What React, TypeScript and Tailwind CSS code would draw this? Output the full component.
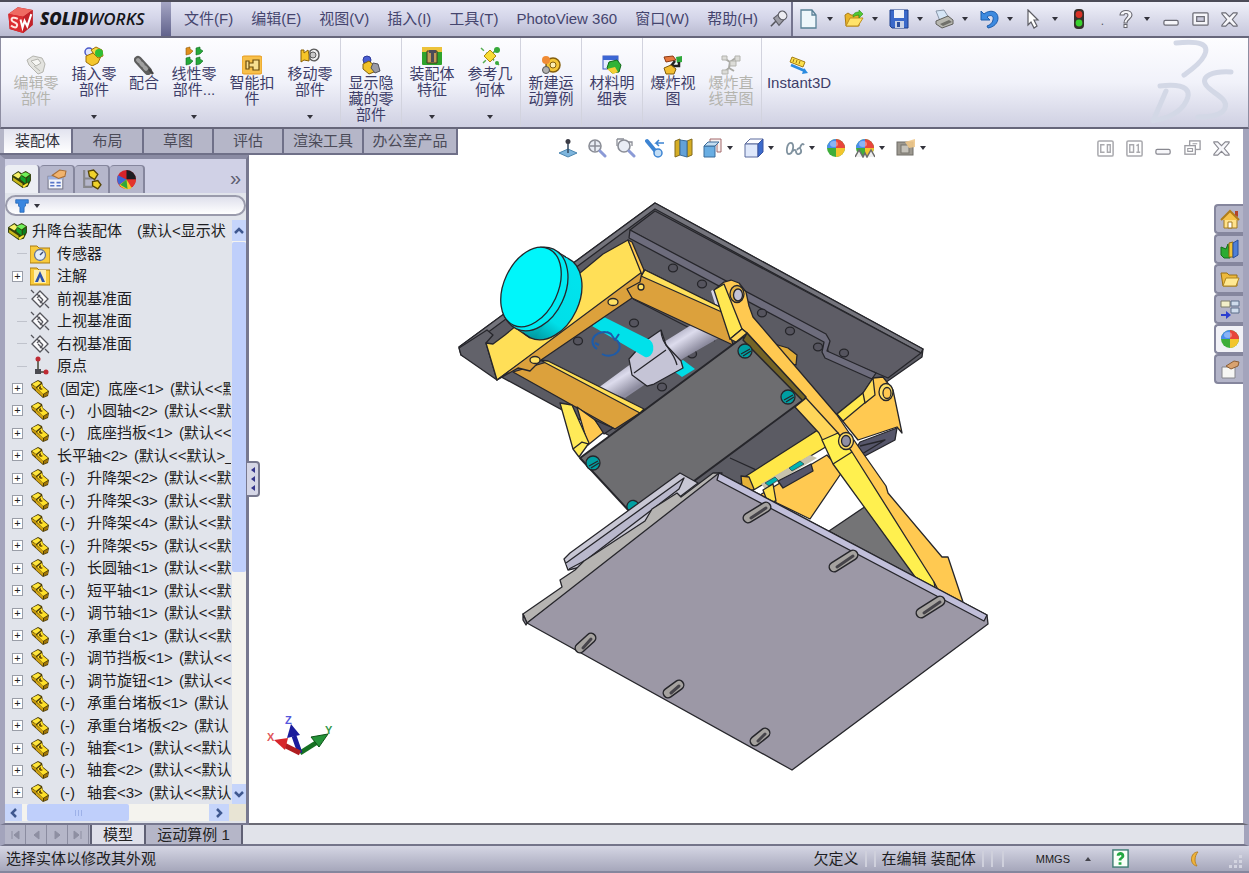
import type { ReactNode } from "react";

const partIcon = (
  <>
    <path d="M1 5 8 1l4 2 1 4 6 5-1 5-5 2L2 9z" fill="#4a3b08" />
    <path d="M2 5 8 2l3 2-5 4z" fill="#ffe63a" />
    <path d="M2 6l4 2v3L2 8z" fill="#c79a0c" />
    <path d="M7 9l5-4 1 3 5 4-5 3z" fill="#ffe02a" />
    <path d="M6 9l7 6v3l-7-6z" fill="#d2a413" />
    <path d="M14 15l4-2v3l-4 2z" fill="#9f7508" />
    <path d="M9 8l2-1v2l2 1-2 1-2-1z" fill="#6b4b04" />
  </>
);

const wheel = (
  <>
    <circle cx="10" cy="10" r="9" fill="#3fae3a" />
    <path d="M10 10V1a9 9 0 0 0-9 9z" fill="#4a8df0" />
    <path d="M10 10V1a9 9 0 0 1 9 9z" fill="#e8453b" />
    <path d="M10 10h9a9 9 0 0 1-9 9z" fill="#f3c52d" />
    <ellipse cx="8" cy="6" rx="4" ry="3" fill="#fff" opacity=".35" />
  </>
);

const asmIcon = (
  <>
    <path d="M1 6 7 2l3 2 4-2 5 3v6l-3 6-5 1L1 11z" fill="#33400a" />
    <path d="M2 6l5-3 3 3-3 3z" fill="#f7f06a" />
    <path d="M2 8l9 6v3l-9-6z" fill="#c9b61a" />
    <path d="M9 5l5-2 4 2-4 3z" fill="#6ff05a" />
    <path d="M9 6l5 3v5l-5-4z" fill="#12a329" />
    <path d="M15 9l3-3v5l-3 3z" fill="#0c7e1e" />
    <path d="M11 16l5-3v2l-4 3z" fill="#ffe63a" />
  </>
);

const magnifier = (
  <>
    <circle cx="8" cy="8" r="6" fill="#e9edf5" stroke="#8a8d96" strokeWidth="1.6" />
    <path d="M13 13l5 5" stroke="#8b9ad6" strokeWidth="3" strokeLinecap="round" />
  </>
);

const icons: Record<string, ReactNode> = {
  part: partIcon,
  asm: asmIcon,
  wheel,
  logo: (
    <>
      <path d="M1 6 8 1l11 2v11l-7 6L2 17z" fill="#b3141b" />
      <path d="M1 6 8 1l11 2-7 5z" fill="#ef6a62" />
      <path d="M12 8l7-5v11l-7 6z" fill="#c3222a" />
      <path d="M1 6l11 2v12L2 17z" fill="#dc2d31" />
      <path d="M8 9.500C5 8 3 8.500 3.500 10.500S8 12 7.500 14.500 4 15.500 3 14.500" stroke="#ffe6e0" strokeWidth="1.500" fill="none" />
      <path d="M10 10l1.500 6L13 11l2 4 3-9" stroke="#fff" strokeWidth="1.500" fill="none" />
    </>
  ),
  pin: (
    <>
      <path d="M1 18l6-6" stroke="#55555c" strokeWidth="1.800" />
      <path d="M4 9l9-7 5 6-8 9z" fill="#9d9da6" stroke="#5d5d66" strokeWidth="1.300" />
      <ellipse cx="14" cy="6" rx="4.500" ry="5" fill="#ececf2" stroke="#5d5d66" strokeWidth="1.300" transform="rotate(-40 14 6)" />
    </>
  ),
  doc: <path d="M2 1h11l4 5v13H2z M13 1v5h4" fill="#eef7fb" stroke="#5a8297" strokeWidth="1.300" />,
  open: (
    <>
      <path d="M1 6l3-2 3 2h8v11H2z" fill="#e9b52a" stroke="#ab7c14" />
      <path d="M2 17l4-8h13l-5 8z" fill="#ffe36a" stroke="#bf8e1c" />
      <path d="M9 8c0-4 3-5 6-5V1l4 4-4 4V6c-3 0-4 1-6 2z" fill="#52c832" stroke="#2b8f1c" strokeWidth=".6" />
    </>
  ),
  save: (
    <>
      <path d="M1 1h18v18H3l-2-2z" fill="#3a69c9" stroke="#1d3f8a" />
      <path d="M5 1h10v8H5z" fill="#eef1f8" />
      <path d="M6 12h9v7H6z" fill="#c8d2e6" />
      <path d="M8 13h3v5H8z" fill="#2c4f9c" />
    </>
  ),
  print: (
    <>
      <path d="M2 2l8-1 5 8-9 3z" fill="#d5e5f6" stroke="#8896a8" />
      <path d="M2 12l12-5 5 4v4l-11 4-6-4z" fill="#b7b7b0" stroke="#5f5f5b" />
      <path d="M6 15l9-4 3 2-9 4z" fill="#70706a" />
    </>
  ),
  undo: <path d="M2 2v9h9L8 8c4-3 7-1 6 3-.5 3-3 5-6 6l1 2c6-1 10-5 10-10C19 2 11 0 5 5z" fill="#3d8ae0" stroke="#1d5cab" />,
  cursor: <path d="M4 1l10 10h-4l3 6-3 2-3-6-3 3z" fill="#fff" stroke="#5c5c63" strokeWidth="1.200" />,
  traffic: (
    <>
      <rect x="5" y="0" width="10" height="20" rx="4" fill="#35302c" />
      <circle cx="10" cy="5.500" r="3.400" fill="#d83125" />
      <circle cx="10" cy="14" r="3.400" fill="#38d02d" />
    </>
  ),
  help: (
    <>
      <path d="M4 6c0-6 12-6 12 0 0 4-5 4-5 8H8c0-5 4-5 4-8 0-2-4-2-4 0z" fill="#f7f7fa" stroke="#66666e" strokeWidth="1.100" />
      <rect x="8" y="15.500" width="3" height="3" fill="#fff" stroke="#66666e" />
    </>
  ),
  min: <rect x="2" y="11" width="15" height="5" rx="1.500" fill="#f6f6fa" stroke="#6b6b75" strokeWidth="1.300" />,
  max: (
    <>
      <rect x="2" y="3" width="16" height="13" rx="1" fill="#f6f6fa" stroke="#6b6b75" strokeWidth="1.300" />
      <rect x="6" y="7" width="8" height="5" fill="#c9c9da" stroke="#6b6b75" strokeWidth="1.300" />
    </>
  ),
  close: <path d="M2 3h4l4 4 4-4h4v1l-5 6 5 6v1h-4l-4-4-4 4H2v-1l5-6-5-6z" fill="#f6f6fa" stroke="#6b6b75" strokeWidth="1.200" />,
  restore: (
    <>
      <rect x="7" y="2" width="11" height="9" fill="#fff" stroke="#85858d" strokeWidth="1.400" />
      <rect x="2" y="7" width="11" height="9" fill="#fff" stroke="#85858d" strokeWidth="1.400" />
      <path d="M5 10h5v3H5zM10 5h5" fill="none" stroke="#85858d" strokeWidth="1.200" />
    </>
  ),
  paneL: (
    <>
      <rect x="2" y="2" width="16" height="16" rx="1.500" fill="#fff" stroke="#95959b" strokeWidth="1.600" />
      <path d="M9 6H5v8h4M12 6h3v8h-3z" fill="none" stroke="#95959b" strokeWidth="1.500" />
    </>
  ),
  paneR: (
    <>
      <rect x="2" y="2" width="16" height="16" rx="1.500" fill="#fff" stroke="#95959b" strokeWidth="1.600" />
      <path d="M5 6h4v8H5zM12 7l2-1v8M12 14h4" fill="none" stroke="#95959b" strokeWidth="1.500" />
    </>
  ),
  editPart: (
    <g opacity=".85">
      <path d="M1 5l6-4 9 2 3 6-2 8-5 2-9-9z" fill="#e0e0da" stroke="#a9a9a1" />
      <path d="M5 6l7-2 3 4-5 3zM8 11l6 5" fill="#f6f6f2" stroke="#a9a9a1" />
    </g>
  ),
  insertPart: (
    <>
      <circle cx="5" cy="6" r="4" fill="#dfe5ff" stroke="#4b59c9" strokeWidth="1.500" />
      <path d="M2 10l7-3 8 3-3 7-6 3-6-4z" fill="#f4c62c" stroke="#9d7108" />
      <path d="M7 4l5-3 6 3 1 6-5 2-4-4z" fill="#f9d643" stroke="#9d7108" />
      <circle cx="15" cy="7" r="4" fill="#2fbf35" />
    </>
  ),
  mate: (
    <>
      <path d="M4 5l10 11" stroke="#5d5d5d" strokeWidth="8" strokeLinecap="round" />
      <path d="M4 5l10 11" stroke="#a0a0a0" strokeWidth="4" strokeLinecap="round" strokeDasharray="2 3" />
      <path d="M15 14l4 5" stroke="#444" strokeWidth="2.500" />
    </>
  ),
  pattern: (
    <>
      <path d="M2 2l4-1v2l3 2-3 3-4 1z" fill="#e08f1c" stroke="#8f5a0c" strokeWidth=".6" />
      <path d="M12 2l4-1v2l3 2-3 3-4 1zM2 12l4-1v2l3 2-3 3-4 1zM12 12l4-1v2l3 2-3 3-4 1z" fill="#26a83a" stroke="#116b20" strokeWidth=".6" />
    </>
  ),
  smart: (
    <>
      <rect x="0" y="1" width="20" height="18" rx="2" fill="#f7c04a" stroke="#e79a1c" />
      <path d="M4 6h3v8H4zM7 8h4V5h6v10h-6v-3H7z" fill="#f8df91" stroke="#6a4b0c" strokeWidth="1.200" />
    </>
  ),
  move: (
    <>
      <path d="M1 4h3v3l4-3 1 5v6l-5-1-3 2z" fill="#f6c527" stroke="#886106" />
      <path d="M10 5c4-4 9-1 9 4s-5 8-9 4z" fill="#f2f2f2" stroke="#5b5b5b" strokeWidth="1.400" />
      <circle cx="13" cy="9" r="3" fill="#c9c9c9" stroke="#5b5b5b" />
    </>
  ),
  showHide: (
    <>
      <circle cx="6" cy="5" r="4" fill="#4a5ed2" stroke="#2d3a99" />
      <path d="M2 9l6-3 6 5-1 6-5 2-6-5z" fill="#f2c32a" stroke="#83600a" />
      <path d="M12 8l5 1 2 7-5 2-4-5z" fill="#9b9ba5" stroke="#50505c" />
    </>
  ),
  feature: (
    <>
      <rect x="0" y="1" width="20" height="18" rx="1" fill="#2fa32b" />
      <path d="M0 1h20v5H0z" fill="#ecc23a" />
      <path d="M5 5h10v12H5z" fill="#c19b58" stroke="#3b3b20" />
      <path d="M9 4h3v12H9zM7 4h7v3H7z" fill="#4c4c58" />
    </>
  ),
  refGeo: (
    <>
      <path d="M1 2l18 17M3 17L18 2" stroke="#55ad51" strokeWidth="1.500" strokeDasharray="4 3" />
      <path d="M10 4l6 6-6 6-6-6z" fill="#f8dc35" stroke="#af870f" />
      <circle cx="17" cy="4" r="3" fill="#37a93a" />
      <circle cx="17" cy="17" r="2" fill="#37a93a" />
    </>
  ),
  motion: (
    <>
      <circle cx="12" cy="10" r="7" fill="#f5c638" stroke="#845e0c" strokeWidth="1.500" />
      <circle cx="12" cy="10" r="3" fill="#fdeeb2" stroke="#845e0c" />
      <circle cx="5" cy="5" r="4" fill="#f08b35" />
      <circle cx="5" cy="15" r="3.500" fill="#b1b1b1" stroke="#555" />
    </>
  ),
  bom: (
    <>
      <rect x="1" y="1" width="15" height="13" fill="#e6ebff" stroke="#3c59bd" />
      <path d="M1 1h15v4H1z" fill="#3c66d4" />
      <path d="M7 7l8-2 4 5-2 7-7 1-5-5z" fill="#31b337" stroke="#106a18" />
      <path d="M5 14l8-2 3 5-5 2z" fill="#f4cf36" />
    </>
  ),
  explode: (
    <>
      <path d="M1 2l9-1 3 4-10 2z" fill="#e7793f" stroke="#8c3a13" />
      <path d="M13 2l6-1v6l-5 1z" fill="#2fa83a" />
      <path d="M12 6l-4 5h8V7" fill="none" stroke="#222" strokeWidth="2.500" />
      <path d="M1 13l7-3 5 4-2 5H3z" fill="#f2be32" stroke="#7f5b0b" />
    </>
  ),
  explodeLine: (
    <>
      <path d="M3 3l6 4 7-5M9 7l-1 6-6 5M8 13l5 3" fill="none" stroke="#a9a9a4" strokeWidth="2" />
      <path d="M1 1h5v4H1zM14 1h5v5h-5zM1 15h6v4H1zM9 6h6v5H9z" fill="#dcdcd8" stroke="#b3b3ae" />
    </>
  ),
  instant: (
    <>
      <path d="M3 2l13 5-2 5L1 7z" fill="#fbe04c" stroke="#a37c12" />
      <path d="M5 4l-1 3M8 5l-1 3M11 6l-1 3" stroke="#a37c12" />
      <path d="M2 10l14 6" stroke="#2b8be0" strokeWidth="2.500" />
      <path d="M19 18l-6 1 2-6z" fill="#2b8be0" />
    </>
  ),
  normal: (
    <>
      <path d="M1 15l9-4 9 4-9 4z" fill="#7db5dd" stroke="#4c86b0" />
      <path d="M10 15V5" stroke="#33475c" strokeWidth="1.500" />
      <circle cx="10" cy="3.500" r="2.500" fill="#3d3d46" />
    </>
  ),
  zoomFit: (
    <>
      {magnifier}
      <path d="M8 3v10M3 8h10" stroke="#8a8d96" strokeWidth="1.500" />
    </>
  ),
  zoomArea: (
    <>
      {magnifier}
      <path d="M1 1h7M1 1v7M12 4h4v4" stroke="#8a8d96" strokeWidth="1.300" fill="none" />
    </>
  ),
  prevView: (
    <>
      <path d="M2 3l10 12" stroke="#3d84d2" strokeWidth="4" strokeLinecap="round" />
      <circle cx="13" cy="15" r="4" fill="#c3def6" stroke="#3d84d2" strokeWidth="1.500" />
      <path d="M19 5h-8l3-3M11 5l3 3" stroke="#3d84d2" strokeWidth="1.500" fill="none" />
    </>
  ),
  section: (
    <>
      <path d="M1 3l5-2v16l-5 2zM13 3l5-2v16l-5 2z" fill="#d5ad24" stroke="#826a1c" />
      <path d="M6 2l7 1v16l-7-2z" fill="#63a1d8" stroke="#3a6c9b" />
    </>
  ),
  orient: (
    <>
      <path d="M7 1h11v13h-4V5H7z" fill="#f8f1f1" stroke="#a2686a" />
      <path d="M1 8h11v11H1z" fill="#69aee3" stroke="#3a6c9b" />
      <path d="M1 8l4-4h11l-4 4z" fill="#c4def2" stroke="#3a6c9b" />
    </>
  ),
  display: (
    <>
      <path d="M1 6l5-5h13l-5 5z" fill="#fdfdff" stroke="#5b6a9d" />
      <path d="M1 6h13v13H1z" fill="#dfe8fb" stroke="#5b6a9d" />
      <path d="M14 6l5-5v13l-5 5z" fill="#3c6bcc" stroke="#3a55a0" />
    </>
  ),
  glasses: (
    <path d="M6 5C2 4 0 16 4 16s6-11 2-11zM8 13c2-2 3-1 3 1 1 4 6 2 5-2-1-3-3-2-4 0M15 10c1-4 3-5 4-3" fill="none" stroke="#80929f" strokeWidth="1.800" />
  ),
  scene: (
    <>
      {wheel}
      <path d="M0 19l4-7 4 7 2-4 2 4 4-7 4 7" fill="#efefef" stroke="#6b6b6b" strokeWidth="1.500" />
    </>
  ),
  render: (
    <>
      <rect x="1" y="4" width="16" height="13" fill="#9d9990" stroke="#6f6c66" />
      <rect x="5" y="7" width="8" height="8" fill="#c5c2ba" stroke="#77746d" />
      <path d="M9 4l10-3v8l-6 1z" fill="#f0c889" opacity=".9" />
    </>
  ),
  props: (
    <>
      <rect x="2" y="7" width="14" height="12" fill="#f2f4fb" stroke="#77798a" />
      <path d="M2 7h14v3H2z" fill="#9fb1dd" />
      <path d="M4 13h4M4 16h4M10 13h4M10 16h4" stroke="#5876c8" strokeWidth="1.500" />
      <path d="M6 6l7-5 6 1-1 5-6 2z" fill="#f1b36d" stroke="#a86d34" />
    </>
  ),
  config: (
    <>
      <path d="M3 1v16h8M3 9h8" stroke="#87878c" strokeWidth="2" fill="none" />
      <path d="M7 2l5-1 4 4-3 5-5-3zM11 12l5-1 3 4-3 4-5-3z" fill="#f0d22a" stroke="#554405" strokeWidth="1.300" />
    </>
  ),
  appear: (
    <>
      <circle cx="10" cy="10" r="9" fill="#d8232a" />
      <path d="M10 10V1a9 9 0 0 1 9 9z" fill="#1d1d22" />
      <path d="M10 10l9 0a9 9 0 0 1-6 8z" fill="#e3352d" />
      <path d="M10 10l5 8a9 9 0 0 1-12-3z" fill="#f5c929" />
      <path d="M10 10L3 15a9 9 0 0 1-1-9z" fill="#3d67d8" />
      <path d="M10 10l-6 5 7 4z" fill="#2fa83a" />
    </>
  ),
  sensor: (
    <>
      <path d="M0 2h7l2 2h11v15H0z" fill="#f9cb3c" stroke="#a97a10" />
      <circle cx="10" cy="11" r="5.500" fill="#e4eef9" stroke="#6a7894" strokeWidth="1.300" />
      <path d="M10 11l3-3" stroke="#3b4a73" strokeWidth="1.500" />
    </>
  ),
  note: (
    <>
      <path d="M0 2h7l2 2h11v15H0z" fill="#f9cb3c" stroke="#a97a10" />
      <path d="M4 4h12v13H4z" fill="#fdeeb0" />
      <path d="M5 16l5-11 5 11h-3l-2-5-2 5z" fill="#2c53ae" />
    </>
  ),
  plane: (
    <>
      <path d="M10 2l8 8-8 8-8-8z" fill="#fbfbfd" stroke="#55555c" strokeWidth="1.300" />
      <path d="M7 5l6 6M8 10l5 5M13 11l-3 3M7 9l3-3M1 1l3 3M15 15l4 4" fill="none" stroke="#55555c" strokeWidth="1.300" />
    </>
  ),
  origin: (
    <>
      <path d="M8 3v13h8" stroke="#443" strokeWidth="1.500" fill="none" />
      <circle cx="8" cy="3" r="2.500" fill="#bf2a33" />
      <circle cx="16" cy="16" r="2.500" fill="#bf2a33" />
      <rect x="5" y="13" width="6" height="5" fill="#4a4a50" />
    </>
  ),
  funnel: <path d="M1 1h18v5h-4v4l-2 2v7H7v-7l-2-2V6H1z" fill="#3986e0" stroke="#1c5cae" />,
  home: (
    <>
      <path d="M4 10h13v9H4z" fill="#ffe28b" stroke="#a37a20" />
      <path d="M1 11l9-9 9 9" fill="#f6c24a" stroke="#b07d1b" strokeWidth="2" />
      <path d="M15 2h3v6l-3-2z" fill="#b3442b" />
      <path d="M8 13h4v6H8z" fill="#fff" stroke="#a37a20" />
    </>
  ),
  library: (
    <>
      <path d="M1 8l5 2 2-5 2 14H4l-3-3z" fill="#2bab32" stroke="#13701c" />
      <path d="M9 4l4-1v15H9z" fill="#f2c337" stroke="#8f6c11" />
      <path d="M13 4l5-3v15l-5 3z" fill="#4f7fd6" stroke="#29509c" />
    </>
  ),
  folder: (
    <>
      <path d="M1 4h6l2 2h8v11H3z" fill="#edb93c" stroke="#9a7113" />
      <path d="M3 17l3-8h13l-3 8z" fill="#ffe993" stroke="#b08722" />
    </>
  ),
  palette: (
    <>
      <path d="M1 2h9v6H1z" fill="#f2efc9" stroke="#7d7d6a" />
      <path d="M11 2h8v5h-8zM11 9h8v5h-8z" fill="#cfdcec" stroke="#5c6f8a" />
      <path d="M1 15h5v-3l5 4-5 4v-3H1z" fill="#2d3fd0" />
    </>
  ),
  custom: (
    <>
      <path d="M2 8h13v11H2z" fill="#f6f6f4" stroke="#86868c" />
      <path d="M6 7l8-5 5 1-1 4-7 3z" fill="#d9a26e" stroke="#8c5f36" />
    </>
  ),
  qmark: (
    <>
      <rect x="2" y="1" width="16" height="18" fill="#f8fff8" stroke="#3f7d74" strokeWidth="1.500" />
      <path d="M6 7c0-5 8-5 8 0 0 3-3 3-3 5H8c0-3 3-3 3-5 0-1-2-1-2 0zM8 14h3v2.500H8z" fill="#23a842" />
    </>
  ),
  moon: <path d="M13 3C5 3 4 16 12 17c-1-2-2-3-2-6s1-6 3-8z" fill="#f0b43a" stroke="#b8832a" />,
};

function Icon({ name, size = "size-5" }: { name: string; size?: string }) {
  return (
    <svg viewBox="0 0 20 20" className={`${size} shrink-0`} aria-hidden="true">
      {icons[name]}
    </svg>
  );
}

function Arrow() {
  return (
    <svg viewBox="0 0 6 4" className="h-1 w-1.5 shrink-0" aria-hidden="true">
      <path d="M0 0h6L3 4z" fill="#33333c" />
    </svg>
  );
}

const menus = ["文件(F)", "编辑(E)", "视图(V)", "插入(I)", "工具(T)", "PhotoView 360", "窗口(W)", "帮助(H)"];

const quick: [string, string][] = [
  ["doc", "新建"],
  ["open", "打开"],
  ["save", "保存"],
  ["print", "打印"],
  ["undo", "撤消"],
  ["cursor", "选择"],
];

function TitleBar() {
  return (
    <header className="flex h-[38px] shrink-0 items-stretch border-t-2 border-b-2 border-t-[#4c4c58] border-b-[#66667a] bg-linear-to-b from-[#e6e7f5] via-[#d3d4e8] to-[#b9bad0]">
      <div className="flex w-[161px] items-center gap-1.5 pl-[7px]">
        <Icon name="logo" size="size-[27px]" />
        <span className="font-['Open_Sans',sans-serif] text-[17px] text-[#16161a] italic">
          <b className="font-extrabold">SOLID</b>
          <span className="font-semibold">WORKS</span>
        </span>
      </div>
      <div className="w-[10px] bg-linear-to-b from-[#a5a6c4] to-[#62638c]" />
      <nav className="flex grow items-center gap-[18px] pl-[13px] text-[15px] whitespace-nowrap text-[#45456e]">
        {menus.map((m) => (
          <button key={m} type="button">
            {m}
          </button>
        ))}
        <button type="button" aria-label="固定菜单" className="-ml-1.5">
          <Icon name="pin" size="size-[18px]" />
        </button>
      </nav>
      <div className="flex items-center border-l-2 border-[#74748e] bg-linear-to-b from-[#f0f1fa] to-[#c6c7dc] pr-[10px] pl-[6px]">
        {quick.map(([name, label]) => (
          <button key={name} type="button" aria-label={label} className="flex w-[45px] items-center gap-[8px]">
            <Icon name={name} />
            <Arrow />
          </button>
        ))}
        <button type="button" aria-label="重建模型">
          <Icon name="traffic" />
        </button>
        <span className="w-[27px] pt-1 text-center text-[12px] text-[#55555f]">.</span>
        <button type="button" aria-label="帮助" className="flex items-center gap-[8px]">
          <Icon name="help" />
          <Arrow />
        </button>
        <div className="ml-[12px] flex gap-[10px]">
          <button type="button" aria-label="最小化">
            <Icon name="min" size="size-[19px]" />
          </button>
          <button type="button" aria-label="最大化">
            <Icon name="max" size="size-[19px]" />
          </button>
          <button type="button" aria-label="关闭">
            <Icon name="close" size="size-[19px]" />
          </button>
        </div>
      </div>
    </header>
  );
}

type Tool = { icon: string; lines: string[]; menu?: boolean; off?: boolean; width?: string };

const toolGroups: Tool[][] = [
  [
    { icon: "editPart", lines: ["编辑零", "部件"], off: true },
    { icon: "insertPart", lines: ["插入零", "部件"], menu: true },
    { icon: "mate", lines: ["配合"], width: "w-[42px]" },
    { icon: "pattern", lines: ["线性零", "部件..."], menu: true },
    { icon: "smart", lines: ["智能扣", "件"] },
    { icon: "move", lines: ["移动零", "部件"], menu: true },
  ],
  [{ icon: "showHide", lines: ["显示隐", "藏的零", "部件"] }],
  [
    { icon: "feature", lines: ["装配体", "特征"], menu: true },
    { icon: "refGeo", lines: ["参考几", "何体"], menu: true },
  ],
  [{ icon: "motion", lines: ["新建运", "动算例"] }],
  [{ icon: "bom", lines: ["材料明", "细表"] }],
  [
    { icon: "explode", lines: ["爆炸视", "图"] },
    { icon: "explodeLine", lines: ["爆炸直", "线草图"], off: true },
  ],
  [{ icon: "instant", lines: ["Instant3D"], width: "w-[72px]" }],
];

function ToolButton({ tool }: { tool: Tool }) {
  return (
    <button
      type="button"
      disabled={tool.off}
      className={`flex h-full flex-col items-center text-[15px] leading-4 whitespace-nowrap ${tool.width ?? "w-[58px]"} ${
        tool.menu ? "pt-[8px]" : "pt-[17px]"
      } ${tool.off ? "text-[#b4b4ae]" : "text-[#3d3d68]"}`}
    >
      <Icon name={tool.icon} />
      {tool.lines.map((line) => (
        <span key={line} className="block">
          {line}
        </span>
      ))}
      {tool.menu && (
        <span className="mt-auto pb-[8px]">
          <Arrow />
        </span>
      )}
    </button>
  );
}

function Ribbon() {
  return (
    <section className="flex h-[91px] shrink-0 items-stretch border-x border-b-2 border-x-[#8e8ea2] border-b-[#66667a] bg-linear-to-b from-[#fdfdff] via-[#f1f2fa] to-[#cfd0e2] pl-[6px]">
      {toolGroups.map((group, i) => (
        <div key={i} className="flex">
          {i > 0 && <div className="mx-px w-px bg-[#d2d3de]" />}
          {group.map((tool) => (
            <ToolButton key={tool.icon} tool={tool} />
          ))}
        </div>
      ))}
      <svg viewBox="0 0 90 86" className="mr-[10px] ml-auto h-[86px] w-[90px]" aria-hidden="true">
        <g fill="none" stroke="#d3d8e6" strokeWidth="5" strokeLinecap="round" strokeLinejoin="round">
          <path d="M28 5c22-2 35 0 28 13-4 8-13 14-20 19" />
          <path d="M12 48c26-3 34 4 24 19-8 11-22 14-31 16l13-30" />
          <path d="M83 34c-18-1-31 4-25 13 5 8 23 13 19 23-3 8-16 9-27 9" />
        </g>
      </svg>
    </section>
  );
}

const ribbonTabs: [string, string][] = [
  ["装配体", "w-[69px]"],
  ["布局", "w-[71px]"],
  ["草图", "w-[70px]"],
  ["评估", "w-[70px]"],
  ["渲染工具", "w-[80px]"],
  ["办公室产品", "w-[94px]"],
];

const viewTools: [string, string, boolean][] = [
  ["normal", "正视于", false],
  ["zoomFit", "整屏显示全图", false],
  ["zoomArea", "局部放大", false],
  ["prevView", "上一视图", false],
  ["section", "剖面视图", false],
  ["orient", "视图定向", true],
  ["display", "显示样式", true],
  ["glasses", "隐藏项目", true],
  ["wheel", "编辑外观", false],
  ["scene", "应用布景", true],
  ["render", "视图设定", true],
];

const docControls: [string, string][] = [
  ["paneL", "左窗格"],
  ["paneR", "右窗格"],
  ["min", "最小化文档"],
  ["restore", "还原文档"],
  ["close", "关闭文档"],
];

function TabRow() {
  return (
    <div className="relative z-10 flex h-[26px] shrink-0 border-r-[6px] border-r-[#a3a4bc] bg-white">
      <div className="flex h-[26px] shrink-0 border-b-2 border-[#6f7088] bg-[#b5b6c8] pl-[4px]" role="tablist">
        {ribbonTabs.map(([tab, width], i) => (
          <button
            key={tab}
            type="button"
            role="tab"
            aria-selected={i === 0}
            className={`border-r-2 border-[#6f7088] text-[15px] leading-5 whitespace-nowrap ${width} ${
              i === 0 ? "bg-linear-to-b from-[#e2e3ef] to-white text-[#33333c]" : "text-[#4b4b58]"
            }`}
          >
            {tab}
          </button>
        ))}
      </div>
      <div className="flex grow items-end pl-[96px]">
        {viewTools.map(([name, label, menu]) => (
          <button
            key={name}
            type="button"
            aria-label={label}
            className={`flex h-[14px] items-center gap-[4px] pl-[4px] ${menu ? "w-[41px]" : "w-[29px]"}`}
          >
            <Icon name={name} />
            {menu && <Arrow />}
          </button>
        ))}
        <div className="mr-[12px] ml-auto flex h-[14px] items-center gap-[10px] opacity-80">
          {docControls.map(([name, label]) => (
            <button key={name} type="button" aria-label={label}>
              <Icon name={name} size="size-[19px]" />
            </button>
          ))}
        </div>
      </div>
    </div>
  );
}

type Node = { icon: string; name: string; prefix?: string; config?: string; open?: boolean };

const part = (name: string, config: string, prefix?: string): Node => ({ icon: "part", name, config, prefix, open: true });

const nodes: Node[] = [
  { icon: "sensor", name: "传感器" },
  { icon: "note", name: "注解", open: true },
  { icon: "plane", name: "前视基准面" },
  { icon: "plane", name: "上视基准面" },
  { icon: "plane", name: "右视基准面" },
  { icon: "origin", name: "原点" },
  part("底座<1>", "(默认<<默", "(固定)"),
  part("小圆轴<2>", "(默认<<默", "(-)"),
  part("底座挡板<1>", "(默认<<", "(-)"),
  part("长平轴<2>", "(默认<<默认>_"),
  part("升降架<2>", "(默认<<默", "(-)"),
  part("升降架<3>", "(默认<<默", "(-)"),
  part("升降架<4>", "(默认<<默", "(-)"),
  part("升降架<5>", "(默认<<默", "(-)"),
  part("长圆轴<1>", "(默认<<默", "(-)"),
  part("短平轴<1>", "(默认<<默", "(-)"),
  part("调节轴<1>", "(默认<<默", "(-)"),
  part("承重台<1>", "(默认<<默", "(-)"),
  part("调节挡板<1>", "(默认<<", "(-)"),
  part("调节旋钮<1>", "(默认<<", "(-)"),
  part("承重台堵板<1>", "(默认", "(-)"),
  part("承重台堵板<2>", "(默认", "(-)"),
  part("轴套<1>", "(默认<<默认", "(-)"),
  part("轴套<2>", "(默认<<默认", "(-)"),
  part("轴套<3>", "(默认<<默认", "(-)"),
];

function TreeRow({ node }: { node: Node }) {
  return (
    <li className="flex min-h-5 flex-1 items-center whitespace-nowrap">
      <span className="flex w-[25px] shrink-0 items-center pl-[7px]">
        {node.open ? (
          <button
            type="button"
            aria-label={`展开 ${node.name}`}
            className="flex size-[11px] items-center justify-center border border-[#9a9ea8] bg-white text-[11px] leading-none text-[#222]"
          >
            +
          </button>
        ) : (
          <span className="ml-[5px] h-px w-[10px] bg-[#c0c3cc]" />
        )}
      </span>
      <Icon name={node.icon} />
      <span className="ml-[7px] flex">
        {node.prefix && <span className="mr-2 min-w-[22px] pl-[3px]">{node.prefix}</span>}
        <span>{node.name}</span>
        {node.config && <span className="ml-[6px]">{node.config}</span>}
      </span>
    </li>
  );
}

const panelTabs: [string, string][] = [
  ["asm", "特征树"],
  ["props", "属性"],
  ["config", "配置"],
  ["appear", "外观"],
];

const chevrons = {
  up: "M2 8l4-4 4 4",
  down: "M2 4l4 4 4-4",
  left: "M8 2L4 6l4 4",
  right: "M4 2l4 4-4 4",
};

function Chevron({ dir }: { dir: keyof typeof chevrons }) {
  return (
    <svg viewBox="0 0 12 12" className="size-3" aria-hidden="true">
      <path d={chevrons[dir]} fill="none" stroke="#3f5890" strokeWidth="2.500" />
    </svg>
  );
}

function FeaturePanel() {
  return (
    <aside className="flex w-[249px] shrink-0 flex-col border-t-4 border-r-[3px] border-b-2 border-l-[5px] border-t-[#8a8ba3] border-r-[#77788f] border-b-[#77788f] border-l-[#a3a4bc] bg-[#e1e4eb]">
      <div className="flex h-[34px] items-end bg-[#d0d1e6]">
        {panelTabs.map(([name, label], i) => (
          <button
            key={name}
            type="button"
            aria-label={label}
            className={`flex h-[28px] w-[35px] items-center justify-center rounded-t border-r-2 border-[#85869d] ${
              i === 0 ? "bg-[#eceef4]" : "border-t bg-[#b5b6cb]"
            }`}
          >
            <Icon name={name} size="size-[21px]" />
          </button>
        ))}
        <button type="button" aria-label="展开面板" className="mr-[5px] mb-[7px] ml-auto text-[20px] leading-4 text-[#5d5e70]">
          »
        </button>
      </div>
      <label className="mt-[2px] flex h-[21px] items-center gap-[5px] rounded-full border-2 border-[#9a9bac] bg-linear-to-b from-[#dfe0ec] to-white pl-[8px]">
        <Icon name="funnel" size="size-[14px]" />
        <Arrow />
        <input aria-label="过滤" className="min-w-0 flex-1 bg-transparent text-[13px] outline-none" />
      </label>
      <div className="flex flex-1 pt-[4px]">
        <div className="flex min-w-0 flex-1 flex-col overflow-hidden text-[15px] leading-5 text-[#1d1d22]">
          <ul className="flex flex-1 flex-col">
            <li className="flex min-h-5 flex-1 items-center pl-[2px] whitespace-nowrap">
              <Icon name="asm" size="size-[21px]" />
              <span className="ml-[4px]">升降台装配体</span>
              <span className="ml-[15px]">(默认&lt;显示状</span>
            </li>
            {nodes.map((node) => (
              <TreeRow key={node.name} node={node} />
            ))}
          </ul>
        </div>
        <div className="ml-px flex w-[14px] flex-col bg-[#f4f3ee]">
          <button type="button" aria-label="向上滚动" className="flex h-[21px] items-center justify-center bg-[#c6d5fb]">
            <Chevron dir="up" />
          </button>
          <div className="mt-px h-[330px] rounded-xs bg-[#bfcffb]" />
          <button type="button" aria-label="向下滚动" className="mt-auto flex h-[20px] items-center justify-center bg-[#c6d5fb]">
            <Chevron dir="down" />
          </button>
        </div>
      </div>
      <div className="mb-[2px] flex h-[17px] items-stretch bg-[#f4f3ee]">
        <button type="button" aria-label="向左滚动" className="flex w-[17px] items-center justify-center bg-[#c6d5fb]">
          <Chevron dir="left" />
        </button>
        <div className="ml-[5px] flex w-[102px] items-center justify-center gap-0.5 rounded-xs bg-[#bfcffb]">
          <span className="h-1.5 w-px bg-[#9db1e8]" />
          <span className="h-1.5 w-px bg-[#9db1e8]" />
          <span className="h-1.5 w-px bg-[#9db1e8]" />
        </div>
        <button type="button" aria-label="向右滚动" className="ml-auto flex w-[20px] items-center justify-center bg-[#c6d5fb]">
          <Chevron dir="right" />
        </button>
        <div className="w-[17px] bg-[#e8e4d4]" />
      </div>
    </aside>
  );
}

const holes = [
  [673, 268],
  [702, 284],
  [762, 313],
  [790, 331],
  [818, 347],
  [844, 353],
  [634, 323],
  [692, 354],
  [578, 341],
  [662, 387],
];

const slots = [
  [748, 518, 766, 507],
  [834, 567, 853, 555],
  [921, 613, 940, 601],
  [580, 648, 591, 638],
  [668, 693, 679, 685],
  [755, 741, 765, 733],
];

const screws = [
  [745, 351],
  [788, 397],
  [593, 463],
];

function Model() {
  return (
    <svg viewBox="249 155 994 668" className="size-full" role="img" aria-label="升降台装配体模型">
      <defs>
        <linearGradient id="knob" gradientUnits="userSpaceOnUse" x1="560" y1="260" x2="548" y2="340">
          <stop offset="0" stopColor="#00e4ee" />
          <stop offset=".7" stopColor="#00dfe8" />
          <stop offset="1" stopColor="#009aa2" />
        </linearGradient>
        <linearGradient id="shaft" gradientUnits="userSpaceOnUse" x1="640" y1="352" x2="655" y2="376">
          <stop offset="0" stopColor="#a9a8bd" />
          <stop offset=".4" stopColor="#dddced" />
          <stop offset="1" stopColor="#8c8b9e" />
        </linearGradient>
      </defs>
      <g stroke="#26262b" strokeWidth="1.300" strokeLinejoin="round">
        {/* upper plate */}
        <path d="M655 203L923 349 922 357 722 497 461 355 459 347z" fill="#5b5b63" />
        <path d="M655 203L923 349 921 353 655 209 464 350 459 347z" fill="#74747c" />
        <path d="M630 230L655 211 921 353 888 378 874 372 829 354 824 338z" fill="#5e5d66" />
        <path d="M630 230L826 334 830 341 827 351 876 373 872 379 825 358 822 352 824 342 629 238z" fill="#6d6c7c" />
        <path d="M459 348L487 330 493 335 486 343 497 380 461 355z" fill="#62626a" />
        {holes.map(([x, y]) => (
          <ellipse key={`${x}-${y}`} cx={x} cy={y} rx="4.500" ry="3.800" fill="#55545e" />
        ))}
        <path d="M730 458L765 474M633 299L715 341" fill="none" />

        {/* shaft and coupling */}
        <path d="M598 388L643 355 696 322 716 308 738 318 724 335 684 358 625 398z" fill="url(#shaft)" stroke="none" />
        <path d="M711 291l10-6 8 14-13 8z" fill="#d7d6e8" stroke="none" />
        <path d="M669 368l14-8 12 9-13 8z" fill="#00dbe6" stroke="none" />
        <path d="M645 341L661 330 666 345 681 361 683 368 654 384 647 386 632 375 629 359z" fill="#c5c4d6" />
        <path d="M661 330C661 345 673 349 677 365M634 373L666 350" fill="none" />
        <path d="M592 326L604 317 648 339a6 8 0 0 1-3 18z" fill="#00e1ea" stroke="none" />

        {/* frame */}
        <path d="M513 372L547 362 643 411 615 429z" fill="#dca13c" />
        <path d="M540 360L548 361 644 409 640 413z" fill="#ffdf55" />
        <path d="M645 270L724 309 733 345 632 298 626 289z" fill="#dca13c" />
        <path d="M645 270L724 309 724 313 641 276z" fill="#ffe05a" />
        <path d="M577 407L595 420 604 432 588 445z" fill="#ffc84f" />
        <path d="M595 420L613 428 604 434z" fill="#4f4e59" />
        <path d="M560 403L572 405 589 443 579 457 573 449z" fill="#ffea58" />
        <path d="M573 449l9-7 7 2" fill="none" />
        <path d="M486 343L493 344 505 335 603 254 628 240 642 271 641 276 497 380z" fill="#ffdf57" />
        <path d="M497 380L642 272 640 282 627 289 632 298 541 360 530 371 518 368z" fill="#dca13c" />
        <path d="M628 240l4 2 12 28-2 5z" fill="#ffc84f" />
        <g fill="#ffe163">
          <ellipse cx="613" cy="302" rx="5" ry="3.500" />
          <ellipse cx="535" cy="360" rx="5" ry="3.500" />
          <ellipse cx="641" cy="287" rx="3" ry="3" />
        </g>

        {/* knob */}
        <ellipse cx="549" cy="298" rx="30" ry="44" transform="rotate(25 549 298)" fill="url(#knob)" />
        <path d="M550 249L568 259 572 290 535 338 516 329z" fill="url(#knob)" stroke="none" />
        <path d="M552 249L566 257M517 329L530 338" fill="none" />
        <ellipse cx="535" cy="289" rx="30" ry="44" transform="rotate(25 535 289)" fill="#00eaf2" />
        <ellipse cx="531" cy="287" rx="27" ry="42" transform="rotate(25 531 287)" fill="#00f6fb" />

        {/* cover plate */}
        <path d="M580 458L743 337 806 398 690 484 630 512z" fill="#6d6d70" strokeWidth="2" />

        {/* rotate pointer */}
        <g fill="none" stroke="#1e5ba8" strokeWidth="2">
          <path d="M597 349a11 9 0 0 1 14-15l-4-2M615 339a11 9 0 0 1-13 15M611 334l4 6 4-6M599 345l-4-2" />
        </g>

        {/* right bracket and rollers */}
        <path d="M860 442L897 428 895 440 863 457 855 450z" fill="#56566a" />
        <path d="M860 446L885 440 862 454" fill="none" />
        <path d="M837 414L863 393 873 378 883 377 893 390 902 433 897 427 858 440z" fill="#ffc951" />
        <path d="M837 414L863 393 867 401 843 421z" fill="#ffe84e" />
        <path d="M863 393l10-15 2 17-10 8z" fill="#ffdd5a" />
        <ellipse cx="886" cy="392" rx="7" ry="8.500" fill="#ffe067" />
        <ellipse cx="887" cy="393" rx="4" ry="5.500" fill="#ffc951" />
        <path d="M760 495L827 455 842 472 810 519 777 503z" fill="#ffc951" />
        <path d="M743 478L818 430 829 445 752 491z" fill="#ffe748" />
        <path d="M741 476l8 1 5 12-6 4-6-7z" fill="#e5b137" />
        <path d="M761 484L810 455 817 458 765 489z" fill="#c7c2ac" stroke="none" />
        <path d="M765 483l10-6 3 3-9 6zM789 468l11-7 4 3-12 7z" fill="#00b3b0" strokeWidth=".6" />
        <path d="M778 481L811 464 813 471 783 488z" fill="#56566a" />
        <path d="M763 490l10-6 3 17-8 2z" fill="#ffe04e" />

        {/* lower link plate */}
        <path d="M829 531L866 506 920 579 917 582z" fill="#747476" />

        {/* long arm */}
        <path d="M771 343l17 5 9 7-1 10-10-3z" fill="#e3ae38" />
        <path d="M714 290L724 282 731 280 739 283 746 292 749 306 753 317 837 415 858 446 886 486 888 493 942 557 948 557 963 602 940 596 833 447 805 398 747 333 741 328z" fill="#ffc951" />
        <path d="M714 290L724 284 742 329 730 339z" fill="#ffe752" />
        <path d="M742 329l5 4-11 9-6-3z" fill="#ffd75a" />
        <path d="M747 333L806 397 803 401 743 340z" fill="#746426" strokeWidth="1.500" />
        <path d="M795 407L806 398 838 433 824 443 819 433z" fill="#ffd65a" />
        <path d="M822 440L838 433 852 452 934 582 937 598 918 581 833 464z" fill="#fff04f" />
        <path d="M833 464l19-12M934 582l8 15" fill="none" />
        <ellipse cx="737" cy="294" rx="7" ry="8.500" fill="#e5b447" />
        <ellipse cx="738" cy="295" rx="4.500" ry="6" fill="#c4c3d6" />
        <ellipse cx="846" cy="441" rx="7.500" ry="8.500" fill="#ffdc67" />
        <ellipse cx="846" cy="441" rx="4.500" ry="5.500" fill="#8f8ea4" />

        {/* screws */}
        {screws.map(([x, y]) => (
          <g key={`${x}-${y}`}>
            <circle cx={x} cy={y} r="7" fill="#009fa2" />
            <path d={`M${x - 4} ${y + 3}l9-5M${x - 2} ${y + 5}l8-5`} fill="none" />
          </g>
        ))}
        <path d="M628 510a6 6 0 0 1 10-7l-2 6z" fill="#009fa2" />

        {/* lower platform */}
        <path d="M564 559L570 553 680 473 698 483 590 565 568 570z" fill="#c8c7d4" />
        <path d="M566 563L684 478 679 489 586 560 569 569" fill="#b9b8cc" />
        <path d="M523 614L562 587 560 580 575 570 584 561 645 521 652 509 677 493 681 497 713 473 722 473 719 482 527 623z" fill="#b6b4b2" />
        <path d="M719 473L987 615 988 624 792 770 527 623z" fill="#9c98a6" />
        <path d="M719 473L987 615 984 621 717 480z" fill="#c1bfda" />
        <path d="M523 614l4 9-1 2-3-5z" fill="#8c8992" />
      </g>
      <g strokeLinecap="round">
        {slots.map(([x1, y1, x2, y2]) => (
          <g key={x1}>
            <line x1={x1} y1={y1} x2={x2} y2={y2} stroke="#25252a" strokeWidth="11" />
            <line x1={x1} y1={y1} x2={x2} y2={y2} stroke="#a5a29f" strokeWidth="8" />
            <line x1={x1 + 3} y1={y1} x2={x2} y2={y2 + 1} stroke="#46444a" strokeWidth="3" />
          </g>
        ))}
      </g>

      {/* axis triad */}
      <g fontFamily="Liberation Sans, sans-serif" fontSize="11" fontWeight="bold">
        <path d="M300 753L319 741" stroke="#167122" strokeWidth="5" />
        <path d="M311 737l17-3-9 13z" fill="#249238" stroke="#0d5417" />
        <path d="M300 753L294 736" stroke="#1b1c9c" strokeWidth="5" />
        <path d="M287 738l4-14 9 11z" fill="#1b1c9c" />
        <path d="M300 753L284 745" stroke="#b01d20" strokeWidth="5" />
        <path d="M274 740l14-2-3 12z" fill="#d7262a" />
        <text x="267" y="741" fill="#e0575a">X</text>
        <text x="285" y="724" fill="#5557dc">Z</text>
        <text x="325" y="734" fill="#36994a">Y</text>
      </g>
    </svg>
  );
}

const taskTabs: [string, string][] = [
  ["home", "资源"],
  ["library", "设计库"],
  ["folder", "文件探索器"],
  ["palette", "视图调色板"],
  ["wheel", "外观"],
  ["custom", "自定义属性"],
];

function Viewport() {
  return (
    <main className="relative min-w-0 flex-1 border-r-[6px] border-b-2 border-r-[#a3a4bc] border-b-[#6b6b75] bg-white">
      <div className="absolute inset-0">
        <Model />
      </div>
      <button
        type="button"
        aria-label="收起面板"
        className="absolute top-[306px] -left-0.5 flex h-[36px] w-[13px] flex-col items-center justify-around rounded-r border-2 border-l-0 border-[#77788f] bg-[#d5d6e6] py-[3px]"
      >
        {[0, 1, 2].map((i) => (
          <svg key={i} viewBox="0 0 4 6" className="h-1.5 w-1" aria-hidden="true">
            <path d="M4 0v6L0 3z" fill="#34348c" />
          </svg>
        ))}
      </button>
      <div className="absolute top-[49px] right-0 flex flex-col">
        {taskTabs.map(([name, label]) => (
          <button
            key={name}
            type="button"
            aria-label={label}
            className={`flex h-[30px] w-[29px] items-center justify-center rounded-l border-2 border-r-0 border-[#85869d] ${
              name === "wheel" ? "bg-[#f1f1f6]" : "bg-[#b3b4c8]"
            }`}
          >
            <Icon name={name} />
          </button>
        ))}
      </div>
    </main>
  );
}

const navPaths: [string, string][] = [
  ["第一个", "M3 2v8M10 2L5 6l5 4z"],
  ["上一个", "M9 2L4 6l5 4z"],
  ["下一个", "M4 2l5 4-5 4z"],
  ["最后一个", "M9 2v8M2 2l5 4-5 4z"],
];

function BottomTabs() {
  return (
    <div className="flex h-[21px] shrink-0 border-x-[5px] border-b-2 border-x-[#a3a4bc] border-b-[#74758a] bg-[#e1e3ea]">
      <div className="flex bg-[#b5b6c8]">
        {navPaths.map(([label, d]) => (
          <button key={label} type="button" aria-label={label} className="flex w-[21px] items-center justify-center border-r border-[#8b8ca0]">
            <svg viewBox="0 0 12 12" className="size-3" aria-hidden="true">
              <path d={d} fill="#8e8fa2" stroke="#8e8fa2" />
            </svg>
          </button>
        ))}
        <button type="button" className="ml-px w-[56px] border-x-2 border-[#5f6074] bg-[#dfe0ea] text-[15px] leading-4 text-[#222]">
          模型
        </button>
        <button type="button" className="w-[97px] border-r-2 border-[#5f6074] text-[15px] leading-4 whitespace-nowrap text-[#222]">
          运动算例 1
        </button>
      </div>
    </div>
  );
}

function StatusBar() {
  return (
    <footer className="flex h-[27px] shrink-0 items-center border-b-2 border-[#85869d] bg-linear-to-b from-[#d5d6e4] to-[#a6a7bb] px-[6px] text-[15px] leading-5 whitespace-nowrap text-[#1d1d22]">
      <span>选择实体以修改其外观</span>
      <div className="ml-auto flex items-center">
        <span>欠定义</span>
        <span className="mx-[6px] h-4 w-[11px] border-x-2 border-[#cfd0dc]" />
        <span>在编辑 装配体</span>
        <span className="ml-[6px] h-4 w-[11px] border-x-2 border-[#cfd0dc]" />
        <span className="h-4 w-[11px] border-r-2 border-[#cfd0dc]" />
        <button type="button" className="ml-[32px] flex items-center gap-[15px] text-[11px]">
          MMGS
          <svg viewBox="0 0 6 4" className="h-1 w-1.5" aria-hidden="true">
            <path d="M0 4h6L3 0z" fill="#44444c" />
          </svg>
        </button>
        <button type="button" aria-label="快速提示" className="ml-[20px]">
          <Icon name="qmark" size="size-[19px]" />
        </button>
        <span className="ml-[55px]">
          <Icon name="moon" />
        </span>
        <svg viewBox="0 0 14 14" className="mt-1 ml-[24px] size-3.5" aria-hidden="true">
          <path d="M10 1h3v3h-3zM5 6h3v3H5zM10 6h3v3h-3zM0 11h3v3H0zM5 11h3v3H5zM10 11h3v3h-3z" fill="#d3d4e0" />
        </svg>
      </div>
    </footer>
  );
}

export default function App() {
  return (
    <div className="flex min-h-screen flex-col bg-white font-['Liberation_Sans','Noto_Sans_CJK_SC',sans-serif]">
      <TitleBar />
      <Ribbon />
      <TabRow />
      <div className="flex flex-1">
        <FeaturePanel />
        <Viewport />
      </div>
      <BottomTabs />
      <StatusBar />
    </div>
  );
}
